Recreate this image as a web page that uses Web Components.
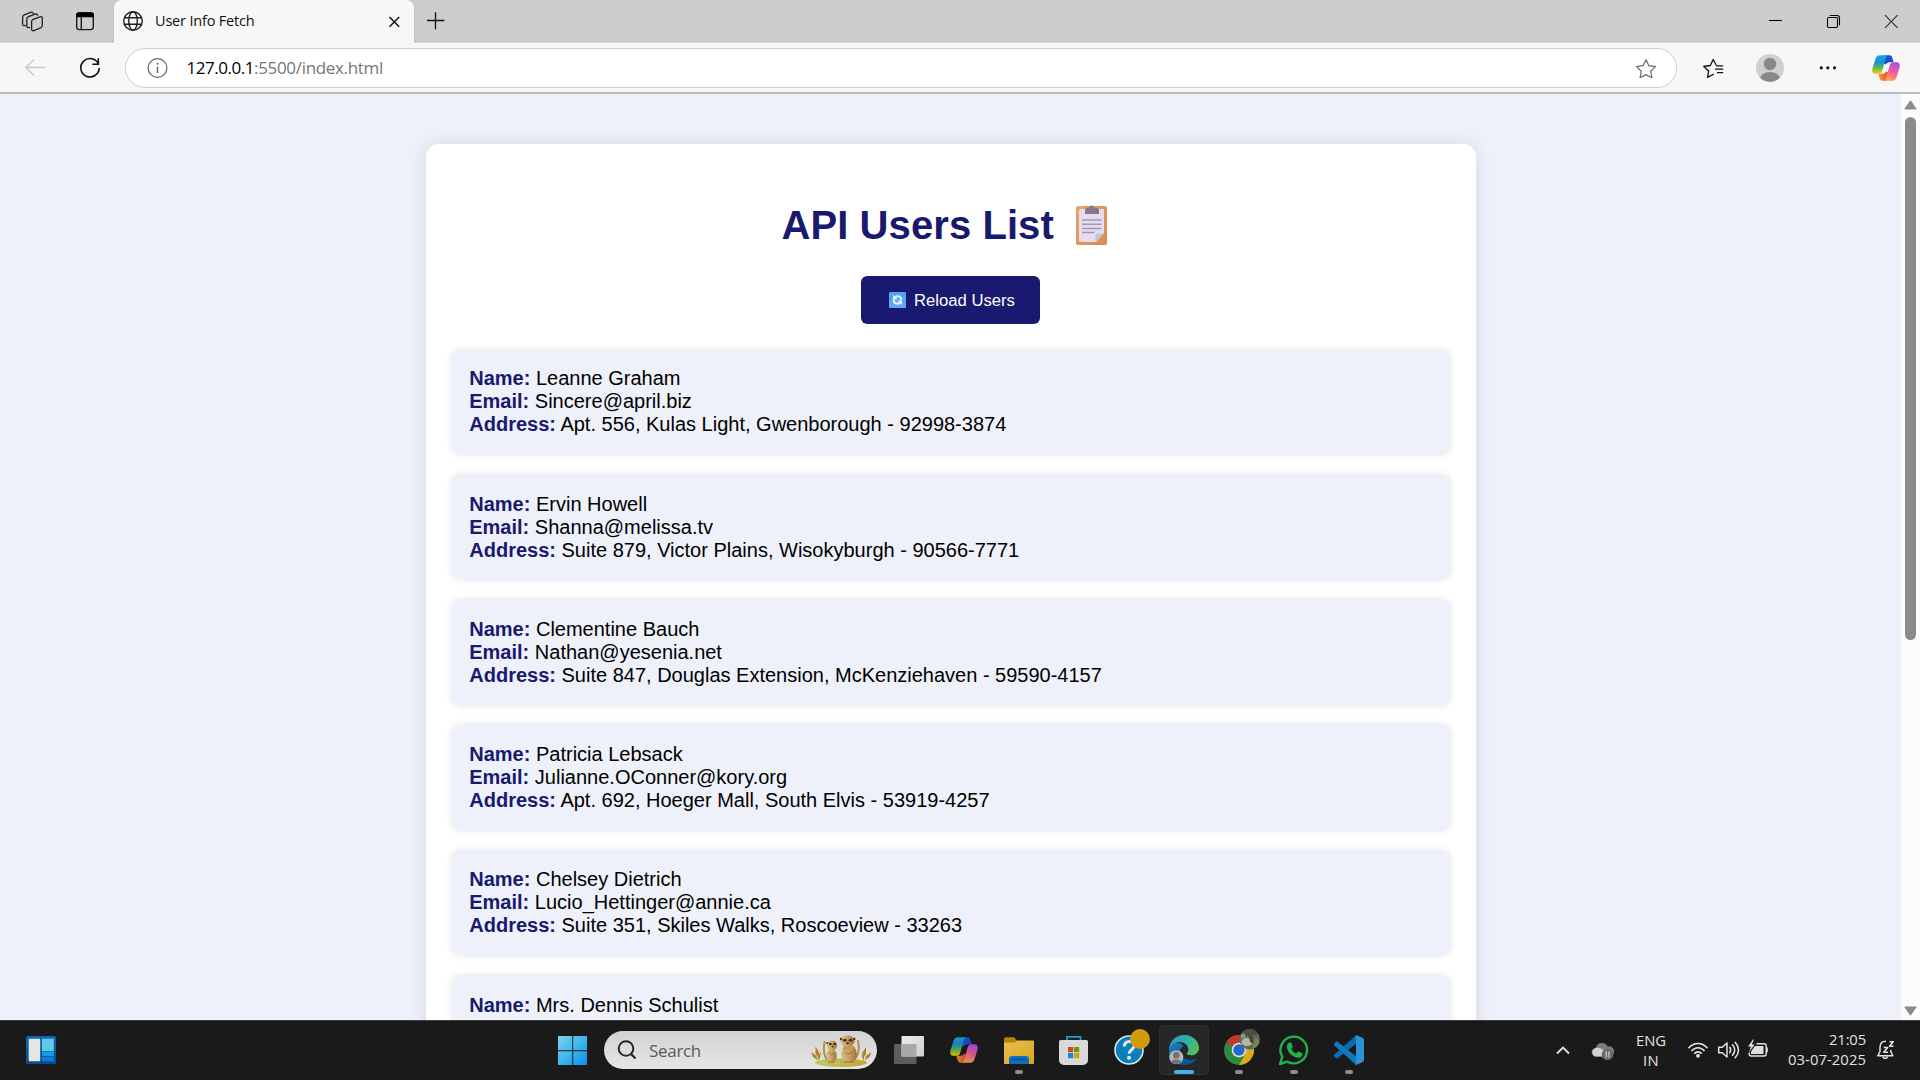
<!DOCTYPE html>
<html lang="en">
<head>
<meta charset="utf-8">
<title>User Info Fetch</title>
<style>
html,body{margin:0;height:100%;overflow:hidden}
body{font-family:"Liberation Sans",Arial,sans-serif}
</style>
</head>
<body>
<desktop-screen></desktop-screen>
<script>
const UI = '"Open Sans","Noto Sans",sans-serif';

/* Base class: renders its template into an open shadow root. */
class Base extends HTMLElement {
  constructor() { super(); this.attachShadow({ mode: 'open' }); }
  connectedCallback() {
    this.shadowRoot.innerHTML = '<style>*{box-sizing:border-box}' + this.css() + '</style>' + this.html();
    this.ready();
  }
  css() { return ''; }
  html() { return ''; }
  ready() {}
}

/* Single line of text tracked to an exact advance width. */
class FitText extends Base {
  css() { return ':host{display:block;white-space:nowrap;font-family:' + UI + '}span{display:inline-block}'; }
  html() { return '<span><slot></slot></span>'; }
  ready() {
    const w = +this.getAttribute('width'), s = this.shadowRoot.querySelector('span');
    const n = this.textContent.length, nat = s.getBoundingClientRect().width;
    s.style.letterSpacing = ((w - nat) / n) + 'px';
  }
}

const copilot = (id) => `
 <defs>
  <linearGradient id="${id}a" x1="0" y1="0" x2="0" y2="1"><stop offset="0" stop-color="#19a5e8"/><stop offset=".35" stop-color="#1b8fd8"/><stop offset=".65" stop-color="#4fb85c"/><stop offset="1" stop-color="#f5d000"/></linearGradient>
  <linearGradient id="${id}b" x1=".6" y1="0" x2=".3" y2="1"><stop offset="0" stop-color="#a84df0"/><stop offset=".45" stop-color="#ee5b9c"/><stop offset="1" stop-color="#ffa552"/></linearGradient>
  <linearGradient id="${id}c" x1="0" y1="0" x2="1" y2="1"><stop offset="0" stop-color="#0f56c8"/><stop offset="1" stop-color="#2348d8"/></linearGradient>
  <linearGradient id="${id}d" x1="0" y1="0" x2="1" y2="0"><stop offset="0" stop-color="#f7a12c"/><stop offset="1" stop-color="#e8432f"/></linearGradient>
 </defs>
 <path d="M13 .3h4.500c1.400 0 2.300.8 2.700 2.200l1.400 4.700h-2.800c-2.400 0-3.700.3-5 2.300l-2-1z" fill="url(#${id}c)"/>
 <path d="M15 25.700h-4.500c-1.400 0-2.300-.8-2.700-2.200l-1.400-4.700h2.800c2.400 0 3.700-.3 5-2.300l2 1z" fill="url(#${id}d)"/>
 <path d="M16.500.3H7.800C5.200.3 4 2 3.100 5L.6 13C-.5 16.500.6 18.800 3.600 18.800h3.500c1.800 0 2.600-1.200 3.300-3.500l3.100-10.800C14.200 2 15 .3 16.500.3z" fill="url(#${id}a)"/>
 <path d="M11.500 25.700h8.700c2.600 0 3.800-1.700 4.700-4.700l2.500-8c1.100-3.500 0-5.800-3-5.800h-3.500c-1.800 0-2.600 1.200-3.300 3.500l-3.100 10.800c-.7 2.500-1.500 4.200-3 4.200z" fill="url(#${id}b)"/>`;

const star = 'M1646 59.700l2.900 6 6.600.9-4.800 4.600 1.200 6.500-5.900-3.100-5.900 3.100 1.200-6.500-4.800-4.600 6.600-.9z';

/* Icon drawings, in screen coordinates. */
const ICONS = {
 workspaces: `<g fill="none" stroke="#222" stroke-width="1.300" stroke-linejoin="round" stroke-linecap="round"><path d="M32.500 19.700l7.500-2.900c1.300-.5 2.300.2 2.300 1.500v7c0 1.200-.5 2-1.600 2.500l-6.800 2.800c-1.300.5-2.300-.2-2.300-1.500v-7.200c0-1 .1-1.700.9-2.200z"/><path d="M29.500 27.500c-1.800.5-2.700-.1-2.700-1.600v-6.700c0-1.300.5-2 1.700-2.500l6.500-2.500c1.300-.5 2.300 0 2.700 1"/><path d="M25.300 25.500c-1.800.5-2.700-.1-2.700-1.600v-6.500c0-1.300.5-2 1.700-2.500l6.300-2.500c1.300-.5 2.300 0 2.700 1"/></g>`,
 tabsmenu: `<rect x="76.700" y="13" width="16.600" height="16.600" rx="2.600" fill="none" stroke="#1a1a1a" stroke-width="1.400"/><path d="M76 17.300v-1.700a3.300 3.300 0 0 1 3.300-3.300h11.400a3.300 3.300 0 0 1 3.300 3.300v1.700z" fill="#000"/><path d="M81.300 17v12.500" stroke="#1a1a1a" stroke-width="1.400"/>`,
 globe: `<g fill="none" stroke="#1e1e1e" stroke-width="1.400"><circle cx="133" cy="21" r="9.300"/><ellipse cx="133" cy="21" rx="4.300" ry="9.300"/><path d="M124.500 17.700h17M124.500 24.300h17"/></g>`,
 tabclose: `<path d="M389.500 17l9.700 9.700M399.200 17l-9.700 9.700" stroke="#111" stroke-width="1.500"/>`,
 plus: `<path d="M427 20.500h17.300M435.500 12.200v17.300" stroke="#111" stroke-width="1.300"/>`,
 min: `<path d="M1769 20.500h13" stroke="#000" stroke-width="1.100"/>`,
 restore: `<g fill="none" stroke="#000" stroke-width="1.100"><rect x="1827.500" y="17.500" width="10" height="10" rx="1.200"/><path d="M1829.700 15.500h7.300a2.500 2.500 0 0 1 2.500 2.500v7.300"/></g>`,
 close: `<path d="M1885 15.200l12.600 12.600M1897.600 15.200L1885 27.800" stroke="#333" stroke-width="1.200"/>`,
 back: `<path d="M44.800 67.500H26M34 59.500l-8.200 8 8.200 8" fill="none" stroke="#c9c9c9" stroke-width="1.300"/>`,
 reload: `<g fill="none" stroke="#111" stroke-width="1.600"><path d="M98.600 64.500a9.200 9.200 0 1 0 .6 3.500"/><path d="M98.300 58.200v6h-6"/></g>`,
 info: `<g fill="none" stroke="#666" stroke-width="1.200"><circle cx="157.500" cy="68" r="9.400"/><path d="M157.500 66.500v6.500" stroke-width="1.400"/></g><circle cx="157.500" cy="63.800" r="1" fill="#666"/>`,
 star: `<path d="${star}" fill="none" stroke="#6b6b6b" stroke-width="1.200" stroke-linejoin="round"/>`,
 favs: `<g fill="none" stroke="#111" stroke-width="1.300" stroke-linejoin="round" stroke-linecap="round"><path d="M1713.500 74.200l-6 3.200 1.200-6.300-5-4.600 6.600-1 2.900-6 2.800 5.300"/><path d="M1716.500 65.800h6.200M1715.500 69.200h7.200M1717.500 72.700h5.200"/></g>`,
 avatar: `<clipPath id="av"><circle cx="1770" cy="68" r="13.800"/></clipPath><circle cx="1770" cy="68" r="14" fill="#d2d0ce"/><g clip-path="url(#av)" fill="#8a8886"><circle cx="1770" cy="64" r="6.200"/><ellipse cx="1770" cy="80" rx="10.500" ry="8"/></g>`,
 dots: `<g fill="#111"><circle cx="1821.300" cy="67.800" r="1.600"/><circle cx="1827.800" cy="67.800" r="1.600"/><circle cx="1834.500" cy="67.800" r="1.600"/></g>`,
 copilotTop: `<g transform="translate(1872 55)">${copilot('t')}</g>`,
 widgets: `<defs><linearGradient id="wg" x2="0" y2="1"><stop stop-color="#0a67b5"/><stop offset="1" stop-color="#084d8c"/></linearGradient></defs><rect x="26" y="1036" width="30" height="28" rx="1.500" fill="url(#wg)"/><rect x="28.700" y="1038.700" width="11.500" height="22.500" rx="1" fill="#e6e6e6"/><path d="M42 1038.700h11.800v12.500H42z" fill="#62c8ea"/><path d="M42 1051.700h11.800v4.500H42z" fill="#1b98e8"/><path d="M42 1057h11.800v4.200H42z" fill="#0a7ce0"/>`,
 start: `<defs><linearGradient id="wn" gradientUnits="userSpaceOnUse" x1="558" y1="1036" x2="587" y2="1065"><stop stop-color="#7fd0ee"/><stop offset=".5" stop-color="#3cb9ea"/><stop offset="1" stop-color="#0a8cf0"/></linearGradient></defs><path d="M558 1036h14.200v14.200H558zM573.200 1036H587v14.200h-13.800zM558 1051.200h14.200V1065H558zM573.200 1051.200H587V1065h-13.800z" fill="url(#wn)"/>`,
 taskview: `<defs><linearGradient id="tv" x2="1" y2="1"><stop stop-color="#eee"/><stop offset="1" stop-color="#cfcfcf"/></linearGradient></defs><rect x="894" y="1044" width="22.500" height="20" rx="1" fill="#5d5d5d"/><rect x="901.500" y="1036" width="22.500" height="20.500" rx="1" fill="url(#tv)"/><path d="M901.500 1044h15v12.500h-15z" fill="#a9a9a9"/>`,
 copilotBar: `<g transform="translate(950 1037)" opacity=".88">${copilot('b')}</g>`,
 explorer: `<defs><linearGradient id="fx" x2="1" y2="1"><stop stop-color="#e6c052"/><stop offset="1" stop-color="#dba51b"/></linearGradient></defs><path d="M1004 1039a1.700 1.700 0 0 1 1.700-1.700h7.500c1 0 1.400.4 2 1.200l1.600 2.500v4H1004z" fill="#b98200"/><path d="M1004 1042.500h10.500l2.500-2h16a1 1 0 0 1 1 1V1063a.9.9 0 0 1-.9.900h-28.200a.9.900 0 0 1-.9-.9z" fill="url(#fx)"/><path d="M1009 1064v-5a3 3 0 0 1 3-3h14a3 3 0 0 1 3 3v5z" fill="#0d6fc0"/><path d="M1012.500 1059.500h13" stroke="#0a4a86" stroke-width="1.400"/>`,
 store: `<path d="M1067 1041.500v-4.700h13.500v4.700" fill="none" stroke="#1e9fd0" stroke-width="1.800"/><path d="M1059 1041.500a1.500 1.500 0 0 1 1.500-1.500h26a1.500 1.500 0 0 1 1.500 1.500v18.800a4.700 4.700 0 0 1-4.700 4.700h-19.600a4.700 4.700 0 0 1-4.700-4.700z" fill="#d9d9d9"/><path d="M1068 1047h5.200v5.200h-5.200z" fill="#cf4520"/><path d="M1074 1047h5.200v5.200h-5.200z" fill="#6b9c0c"/><path d="M1068 1053h5.200v5.200h-5.200z" fill="#0a90d0"/><path d="M1074 1053h5.200v5.200h-5.200z" fill="#dd9f07"/>`,
 help: `<circle cx="1129" cy="1050" r="14" fill="#0a80b8" stroke="#d8e4ea" stroke-width="1.600"/><path d="M1124.300 1046.500c.2-3.300 2.200-5 5-5 2.900 0 4.900 1.600 4.900 4.200 0 4-5.200 4-5.200 8" fill="none" stroke="#e0e6e8" stroke-width="3"/><circle cx="1129" cy="1057.700" r="2" fill="#e0e6e8"/><circle cx="1140" cy="1039" r="10" fill="#d29b0c"/>`,
 edge: `<defs><linearGradient id="e1" gradientUnits="userSpaceOnUse" x1="1170" y1="1038" x2="1199" y2="1052"><stop stop-color="#2b94c6"/><stop offset=".5" stop-color="#2fb0a8"/><stop offset="1" stop-color="#5cc143"/></linearGradient><linearGradient id="e2" x2="1" y2="1"><stop stop-color="#1780c4"/><stop offset="1" stop-color="#0b4788"/></linearGradient></defs>
  <rect x="1159.500" y="1025.500" width="49" height="49" rx="4" fill="#272727" stroke="#303030"/>
  <path d="M1169 1050c0 8.500 6.500 15 15 15 5.500 0 9.700-2.400 12.500-6.300-6.500 3-16.500 1-16.500-7 0-2.500 1.500-4.500 3.500-5.700-4-6-14.500-4-14.500 4z" fill="url(#e2)"/>
  <path d="M1179.500 1050.500c-1.500 7.500 4.500 14 14 11.500 1.500-1 2.500-2 3.200-3.300-6.700 3-15.500.5-15.500-6.500z" fill="#0c559e"/>
  <path d="M1169 1049c1-8.500 7-14 15-14 9 0 15 6.500 15 13 0 4.500-3.700 7.300-7.700 7.300-3 0-4.600-.8-4.600-1.700 0-.6 1.700-1.600 1.700-4.100 0-4-4-7.500-9-7.500-4.500 0-8 2.500-10.400 7z" fill="url(#e1)"/>
  <circle cx="1176.300" cy="1057.300" r="7" fill="#b5b5b5"/><circle cx="1176.300" cy="1055.300" r="3.300" fill="#727272"/><path d="M1171.300 1062a5.300 4 0 0 1 10 0 7 7 0 0 1-10 0z" fill="#727272"/><rect x="1174" y="1070" width="20" height="4" rx="2" fill="#47b1e8"/>`,
 chrome: `<circle cx="1239" cy="1050" r="15" fill="#2d8b41"/><path d="M1239 1050L1226 1042.500A15 15 0 0 1 1252 1042.500z" fill="#c5362b"/><path d="M1226 1042.500A15 15 0 0 1 1252 1042.500H1239z" fill="#c5362b"/><path d="M1239 1042.500h13a15 15 0 0 1-13 22.500l6.500-11.200z" fill="#dcaa1b"/><circle cx="1239" cy="1050" r="7.300" fill="#e2e2e2"/><circle cx="1239" cy="1050" r="5.700" fill="#2468cc"/>
  <clipPath id="ca"><circle cx="1249.700" cy="1039.300" r="10.200"/></clipPath><g clip-path="url(#ca)"><path d="M1239 1028h22v22h-22z" fill="#5c6b55"/><path d="M1239 1028h22v6l-22 3z" fill="#4a5048"/><ellipse cx="1247" cy="1042" rx="5.500" ry="4" fill="#b3b8a3"/><ellipse cx="1256" cy="1044" rx="4" ry="5" fill="#6d8a54"/><path d="M1248 1033l5 3 1 8-4-2z" fill="#5a4138"/><circle cx="1243" cy="1036" r="2.500" fill="#8c9585"/></g>`,
 whatsapp: `<path d="M1280 1064l2.300-7.300a13.300 13.300 0 1 1 5 4.900z" fill="none" stroke="#22b04c" stroke-width="2.400" stroke-linejoin="round"/><path d="M1288.800 1042.700c.8-.8 2-.7 2.500.3l1.200 2.700c.3.700.2 1.200-.3 1.800l-1 1.200c1.200 2.200 2.800 3.700 5 4.800l1.300-1.400c.4-.5 1-.6 1.600-.3l2.600 1.300c.8.400 1 1 .7 1.900-1 2.500-3.600 3.300-6 2.600-4.600-1.400-7.700-4.500-9.200-8.700-.8-2.400-.2-4.600 1.600-6.200z" fill="#22b04c"/>`,
 vscode: `<path d="M1356 1035.300v8.500l-18 14.200c-.8.600-1.400.5-2 0l-1.600-1.500c-.6-.6-.6-1.300 0-2z" fill="#0b6cae"/><path d="M1356 1064.700v-8.500l-18-14.200c-.8-.6-1.400-.5-2 0l-1.600 1.500c-.6.600-.6 1.300 0 2z" fill="#0f79be"/><path d="M1355 1035l1.700.2 6 2.800c.9.400 1.300 1 1.300 1.900v20.200c0 .9-.4 1.500-1.300 1.900l-6 2.800-1.700.2c.6-.4 1-1 1-1.800v-26.400c0-.8-.4-1.400-1-1.800z" fill="#2a93d6"/>`,
 chevron: `<path d="M1557 1053.500l6-6 6 6" fill="none" stroke="#e2e2e2" stroke-width="1.900"/>`,
 cloud: `<g transform="translate(-1.300 0)"><path d="M1597.500 1056.500a4.300 4.300 0 0 1-.5-8.600 6.500 6.500 0 0 1 12-1.500 5 5 0 0 1 2.500 10.100z" fill="#7c7c7c"/><path d="M1597.500 1056.500a4.400 4.400 0 0 1-.5-8.600c5-.5 9 2 13 8.600z" fill="#d2d2d2"/><circle cx="1608.800" cy="1054.500" r="5.800" fill="#6a6a6a"/><path d="M1607.500 1051.500v6M1610.300 1051.500v6" stroke="#ddd" stroke-width="1.100"/></g>`,
 wifi: `<g fill="none" stroke="#e4e4e4" stroke-width="1.600"><path d="M1688.500 1048.300c5.300-6.400 13.700-6.400 19 0"/><path d="M1691.500 1051c3.800-4.400 9.200-4.400 13 0"/><path d="M1694.300 1053.700c2.200-2.500 5.200-2.500 7.400 0"/></g><circle cx="1698" cy="1055.800" r="1.900" fill="#e4e4e4"/>`,
 sound: `<g fill="none" stroke="#e4e4e4" stroke-width="1.500" stroke-linejoin="round" stroke-linecap="round"><path d="M1718.700 1047.200h3.600l4.700-4.200v14l-4.700-4.200h-3.600z"/><path d="M1729.700 1047.300c1.300 1.700 1.300 3.700 0 5.400M1732.500 1044.700c2.800 3.300 2.800 7.300 0 10.600M1735.200 1042.200c4.200 4.900 4.200 10.700 0 15.600"/></g>`,
 battery: `<g transform="translate(-.5 -.5)"><path d="M1757 1044.300h7.700a2 2 0 0 1 2 2v8.200a2 2 0 0 1-2 2h-13a2 2 0 0 1-2-2v-1.500" fill="none" stroke="#e4e4e4" stroke-width="1.400"/><path d="M1755.500 1046.500h8.500v8h-12.500v-2.500z" fill="#dedede"/><path d="M1766.800 1048h1.500v4.700h-1.500z" fill="#e4e4e4"/><path d="M1753.500 1040l-5 7h3l-2 5.500 5.700-7.500h-3l2.300-5z" fill="#e4e4e4"/></g>`,
 bell: `<g fill="none" stroke="#e4e4e4" stroke-width="1.500" stroke-linejoin="round"><path d="M1886 1041.300c-4 0-6 2.700-6 6.200v4l-2.200 4.300h15l-2-4.300v-1.500"/><path d="M1882.700 1056.500c.8 2.500 4.200 2.500 5 0"/><path d="M1883.700 1047.500h4l-4 4.800h4.300M1889.500 1041.700h3.700l-3.700 4.500h4" stroke-width="1.500"/></g>`,
 search: `<circle cx="626" cy="1048.500" r="7.300" fill="none" stroke="#262626" stroke-width="2"/><path d="M631 1054l4.500 4.500" stroke="#262626" stroke-width="2.300"/>`,
 meerkats: `<defs><linearGradient id="mk" x2="1" y2="0"><stop stop-color="#d9bd84"/><stop offset=".5" stop-color="#c9a566"/><stop offset="1" stop-color="#9b7438"/></linearGradient><linearGradient id="gr" x2="1"><stop stop-color="#b9cd6c"/><stop offset="1" stop-color="#c9a531"/></linearGradient></defs>
  <ellipse cx="841" cy="1062.700" rx="26" ry="4.300" fill="url(#gr)"/>
  <g fill="none" stroke="#b5904c" stroke-width="2" stroke-linecap="round"><path d="M827 1060c-3-4-3.500-12-2.500-18"/><path d="M855 1059c4-5 4.500-12 3-18"/></g>
  <g fill="#b08420"><path d="M811 1052l5 3.500 2 5-5-3.500zM815.500 1046.500l3.500 5.500-.5 6.500-3-5zM821 1052l-1 6-2 3 .5-6z"/><path d="M871.500 1052l-5 3.500-2 5 5-3.500zM866 1047l-3.500 5.500.5 6.500 3-5zM861.500 1054l1 4 1.500 3v-5z"/></g>
  <ellipse cx="831.500" cy="1056" rx="5.200" ry="7.500" fill="url(#mk)"/><ellipse cx="832" cy="1045.500" rx="5" ry="4.800" fill="url(#mk)"/>
  <ellipse cx="849" cy="1054" rx="7.800" ry="9.500" fill="url(#mk)"/><path d="M844 1044h8l1 6h-10z" fill="#c29d5e"/><ellipse cx="847.500" cy="1041" rx="7" ry="5.800" fill="url(#mk)"/>
  <g fill="#4a3216"><ellipse cx="830.300" cy="1044" rx="1.500" ry="1.200"/><ellipse cx="834.700" cy="1044" rx="1.500" ry="1.200"/><circle cx="832.500" cy="1046.500" r="1"/><ellipse cx="844.800" cy="1040.300" rx="2" ry="1.500"/><ellipse cx="850.500" cy="1040.300" rx="2" ry="1.500"/><circle cx="847.600" cy="1043.300" r="1.200"/><circle cx="827.200" cy="1043" r="1"/><circle cx="841" cy="1039" r="1.200"/><circle cx="854.300" cy="1039" r="1.200"/></g>
  <g stroke="#8d6a31" stroke-width=".8" fill="none"><path d="M829 1053l2.500 2 2.500-2M844 1052l4 2.500 4.500-2.500M828 1062h6M843 1062h11"/></g>`,
 clipboard: `<defs><linearGradient id="cb" x2="1" y2="1"><stop stop-color="#e9a66b"/><stop offset="1" stop-color="#d98a4e"/></linearGradient></defs><rect x="1076" y="206" width="31" height="39" rx="1.800" fill="url(#cb)"/><rect x="1079" y="209" width="25" height="33" rx="1.200" fill="#e6dcf0"/><path d="M1104 233.500v9h-8.500z" fill="#dc9158"/><path d="M1104 233.500l-8.500 8.500v-7a1.500 1.500 0 0 1 1.500-1.500z" fill="#cbbed8"/><path d="M1085 214v-3.500a3 3 0 0 1 3-3h1a2.700 2.700 0 0 1 5.200 0h1.800a3 3 0 0 1 3 3v3.500z" fill="#84798a"/><path d="M1082 220h19.500M1082 224.200h19.500M1082 228.400h19.500M1082 232.600h12.500" stroke="#a198ab" stroke-width="1.500"/>`,
 sync: `<defs><linearGradient id="sy" x2="0" y2="1"><stop stop-color="#4ea3f5"/><stop offset="1" stop-color="#63a8f7"/></linearGradient></defs><rect x="889" y="292" width="17" height="16" rx="1.300" fill="url(#sy)"/><g fill="none" stroke="#f2f6ff" stroke-width="2"><path d="M895 297.200c3-1.800 6.300-.5 6.500 2.800"/><path d="M900 302.800c-3 1.800-6.300.5-6.500-2.800"/></g><path d="M893 294.800v4.600h4.600z" fill="#f2f6ff"/><path d="M902 305.200v-4.600h-4.600z" fill="#f2f6ff"/>`
};

/* <ui-icon name box="x y w h">: shows one drawing through a window of the given size. */
class UiIcon extends Base {
  css() { return ':host{display:block;flex:none}svg{display:block}'; }
  html() {
    const b = this.getAttribute('box'), [, , w, h] = b.split(' ');
    return `<svg width="${w}" height="${h}" viewBox="${b}">${ICONS[this.getAttribute('name')]}</svg>`;
  }
}

class TabStrip extends Base {
  css() { return `:host{display:flex;height:43px;background:#cdcdcd;border-bottom:1px solid #d9d9d9;box-shadow:inset 0 -1px 1px #c4c4c4}
   .tab{display:flex;align-items:flex-start;width:300px;height:43px;background:#f7f7f7;border-radius:7px 7px 0 0;box-shadow:0 0 2px #a8a8a8;clip-path:inset(0 -3px 0 -3px)}
   fit-text{font-size:14.500px;line-height:20px;color:#111;margin:11px 0 0 9px;width:225px}
   .gap{flex:1}`; }
  html() { return `<ui-icon name="workspaces" box="0 0 60 42"></ui-icon><ui-icon name="tabsmenu" box="60 0 54 42"></ui-icon>
   <div class="tab"><ui-icon name="globe" box="114 0 32 42"></ui-icon><fit-text width="99.500">User Info Fetch</fit-text><ui-icon name="tabclose" box="380 0 34 42"></ui-icon></div>
   <ui-icon name="plus" box="414 0 50 42"></ui-icon><div class="gap"></div>
   <ui-icon name="min" box="1746 0 58 42"></ui-icon><ui-icon name="restore" box="1804 0 58 42"></ui-icon><ui-icon name="close" box="1862 0 58 42"></ui-icon>`; }
}

class ToolBar extends Base {
  css() { return `:host{display:flex;height:51px;background:#f7f7f7;border-bottom:2px solid #bcbcbc}
   .bar{display:flex;flex:none;width:1552px;height:40px;margin-top:5px;background:#fff;border:1px solid #cecece;border-radius:20px}
   .url{display:flex;flex:1;font-size:17px;line-height:24px;padding:7px 0 0 .5px}
   .host{color:#000}.path{color:#767676}`; }
  html() { return `<ui-icon name="back" box="0 43 60 49"></ui-icon><ui-icon name="reload" box="60 43 65 49"></ui-icon>
   <div class="bar"><ui-icon name="info" box="126 49 60 38"></ui-icon><div class="url"><fit-text class="host" width="67.500">127.0.0.1</fit-text><fit-text class="path" width="129">:5500/index.html</fit-text></div><ui-icon name="star" box="1626 49 50 38"></ui-icon></div>
   <ui-icon name="favs" box="1677 43 60 49"></ui-icon><ui-icon name="avatar" box="1737 43 63 49"></ui-icon><ui-icon name="dots" box="1800 43 55 49"></ui-icon><ui-icon name="copilotTop" box="1855 43 65 49"></ui-icon>`; }
}

class UserCard extends Base {
  css() { return `:host{display:block;height:106.500px;margin-bottom:18.750px;padding:18.700px 18.250px;background:#eef1f9;border-radius:10px;box-shadow:0 0 6.250px rgba(0,0,0,.1);font-size:20px;line-height:23px;color:#000;white-space:nowrap}
   b{color:#191970}`; }
  html() {
    const a = n => this.getAttribute(n);
    return `<div><b>Name:</b> ${a('name')}</div><div><b>Email:</b> ${a('email')}</div><div><b>Address:</b> ${a('address')}</div>`;
  }
}

class ReloadButton extends Base {
  css() { return `:host{display:block}button{display:flex;align-items:center;width:179px;height:48px;margin:0 0 0 410px;padding:0 0 0 28px;border:0;border-radius:6.250px;background:#191970;color:#fff;font:16.667px "Liberation Sans",Arial,sans-serif;white-space:nowrap}
   span{margin-left:8px;padding-top:2px}`; }
  html() { return `<button><ui-icon name="sync" box="889 292 17 16"></ui-icon><span><slot></slot></span></button>`; }
}

class UsersPage extends Base {
  css() { return `:host{display:flex;flex:1;min-height:0;overflow:hidden;background:#eef1fa}
   main{flex:1;overflow:hidden;padding-top:50px}
   section{width:1050px;height:1400px;margin:0 0 0 426px;padding:58px 25px 25px;background:#fff;border-radius:12.500px;box-shadow:0 0 18.750px rgba(0,0,0,.1)}
   h1{display:flex;align-items:center;margin:0 0 28px 330.500px;height:46px;font-size:40px;line-height:46px;letter-spacing:.080px;color:#191970;white-space:nowrap}
   h1 span{width:292.500px}
   reload-button{margin-bottom:24.600px}
   aside{display:flex;flex-direction:column;align-items:center;width:19px;background:#fcfcfc;padding:6px 0 4px}
   .thumb{width:11px;height:523px;margin-top:7px;border-radius:6px;background:#8b8b8b}
   .grow{flex:1}svg{display:block}`; }
  html() {
    const users = [
      ['Leanne Graham', 'Sincere@april.biz', 'Apt. 556, Kulas Light, Gwenborough - 92998-3874'],
      ['Ervin Howell', 'Shanna@melissa.tv', 'Suite 879, Victor Plains, Wisokyburgh - 90566-7771'],
      ['Clementine Bauch', 'Nathan@yesenia.net', 'Suite 847, Douglas Extension, McKenziehaven - 59590-4157'],
      ['Patricia Lebsack', 'Julianne.OConner@kory.org', 'Apt. 692, Hoeger Mall, South Elvis - 53919-4257'],
      ['Chelsey Dietrich', 'Lucio_Hettinger@annie.ca', 'Suite 351, Skiles Walks, Roscoeview - 33263'],
      ['Mrs. Dennis Schulist', '', '']];
    return `<main><section><h1><span>API Users List</span><ui-icon name="clipboard" box="1074 203 35 44"></ui-icon></h1><reload-button>Reload Users</reload-button>
     ${users.map(u => u[1] ? `<user-card name="${u[0]}" email="${u[1]}" address="${u[2]}"></user-card>` : `<name-card>${u[0]}</name-card>`).join('')}</section></main>
     <aside><svg width="13" height="10"><path d="M6.500.8L12.200 9H.8z" fill="#8b8b8b" stroke="#8b8b8b" stroke-linejoin="round"/></svg><div class="thumb"></div><div class="grow"></div><svg width="13" height="10"><path d="M6.500 9.200L12.200 1H.8z" fill="#8b8b8b" stroke="#8b8b8b" stroke-linejoin="round"/></svg></aside>`;
  }
}

/* Card cut off by the bottom of the viewport: only its first line shows. */
class NameCard extends UserCard {
  html() { return '<div><b>Name:</b> <slot></slot></div>'; }
}

class TaskApp extends Base {
  css() { return `:host{display:block;position:relative;flex:none;width:50px;height:59px;margin-right:5px}
   i{position:absolute;left:21px;top:49px;width:8px;height:4px;border-radius:2px;background:#8c8c8c}`; }
  html() { return `<ui-icon name="${this.getAttribute('name')}" box="${this.getAttribute('x')} 1021 50 59"></ui-icon>${this.hasAttribute('running') ? '<i></i>' : ''}`; }
}

class TaskBar extends Base {
  css() { return `:host{display:flex;height:60px;background:#1a1a1a;border-top:1px solid #3b3b3b;color:#e2e2e2;font-size:14.800px;line-height:20px}
   .g1{flex:1}.g2{flex:none;width:166px}
   .search{display:flex;flex:none;width:273px;height:38px;margin:10px 7px 0 9px;border-radius:19px;background:linear-gradient(#d2d2d2,#e6e6e6);color:#5a5a5a;font-size:17px;line-height:39px}
   .search fit-text{width:166px}
   .search ui-icon:last-child{margin-left:-5px}
   .col{display:flex;flex:none;flex-direction:column;height:59px}
   .lang{width:60px;align-items:center;padding-top:9px}
   .clock{width:93px;align-items:flex-end;padding-top:8px}`; }
  html() { return `<ui-icon name="widgets" box="0 1021 100 59"></ui-icon><div class="g1"></div>
   <ui-icon name="start" box="545 1021 50 59"></ui-icon>
   <div class="search"><ui-icon name="search" box="604 1031 45 38"></ui-icon><fit-text width="52">Search</fit-text><ui-icon name="meerkats" box="810 1031 64 38"></ui-icon></div>
   <task-app name="taskview" x="884"></task-app><task-app name="copilotBar" x="939"></task-app><task-app name="explorer" x="994" running></task-app><task-app name="store" x="1049"></task-app><task-app name="help" x="1104"></task-app><task-app name="edge" x="1159"></task-app><task-app name="chrome" x="1214" running></task-app><task-app name="whatsapp" x="1269" running></task-app><task-app name="vscode" x="1324" running></task-app>
   <div class="g2"></div>
   <ui-icon name="chevron" box="1545 1021 36 59"></ui-icon><ui-icon name="cloud" box="1581 1021 40 59"></ui-icon>
   <div class="col lang"><fit-text width="30">ENG</fit-text><fit-text width="16">IN</fit-text></div>
   <ui-icon name="wifi" box="1681 1021 32 59"></ui-icon><ui-icon name="sound" box="1713 1021 30 59"></ui-icon><ui-icon name="battery" box="1743 1021 30 59"></ui-icon>
   <div class="col clock"><fit-text width="37">21:05</fit-text><fit-text width="78">03-07-2025</fit-text></div>
   <ui-icon name="bell" box="1866 1021 54 59"></ui-icon>`; }
}

class DesktopScreen extends Base {
  css() { return `:host{display:flex;flex-direction:column;width:1920px;height:1080px;overflow:hidden}
   tab-strip,tool-bar,task-bar{flex:none}`; }
  html() { return '<tab-strip></tab-strip><tool-bar></tool-bar><users-page></users-page><task-bar></task-bar>'; }
}

for (const [n, c] of [['fit-text', FitText], ['ui-icon', UiIcon], ['user-card', UserCard], ['name-card', NameCard], ['reload-button', ReloadButton], ['task-app', TaskApp], ['tab-strip', TabStrip], ['tool-bar', ToolBar], ['users-page', UsersPage], ['task-bar', TaskBar], ['desktop-screen', DesktopScreen]]) customElements.define(n, c);
</script>
</body>
</html>
